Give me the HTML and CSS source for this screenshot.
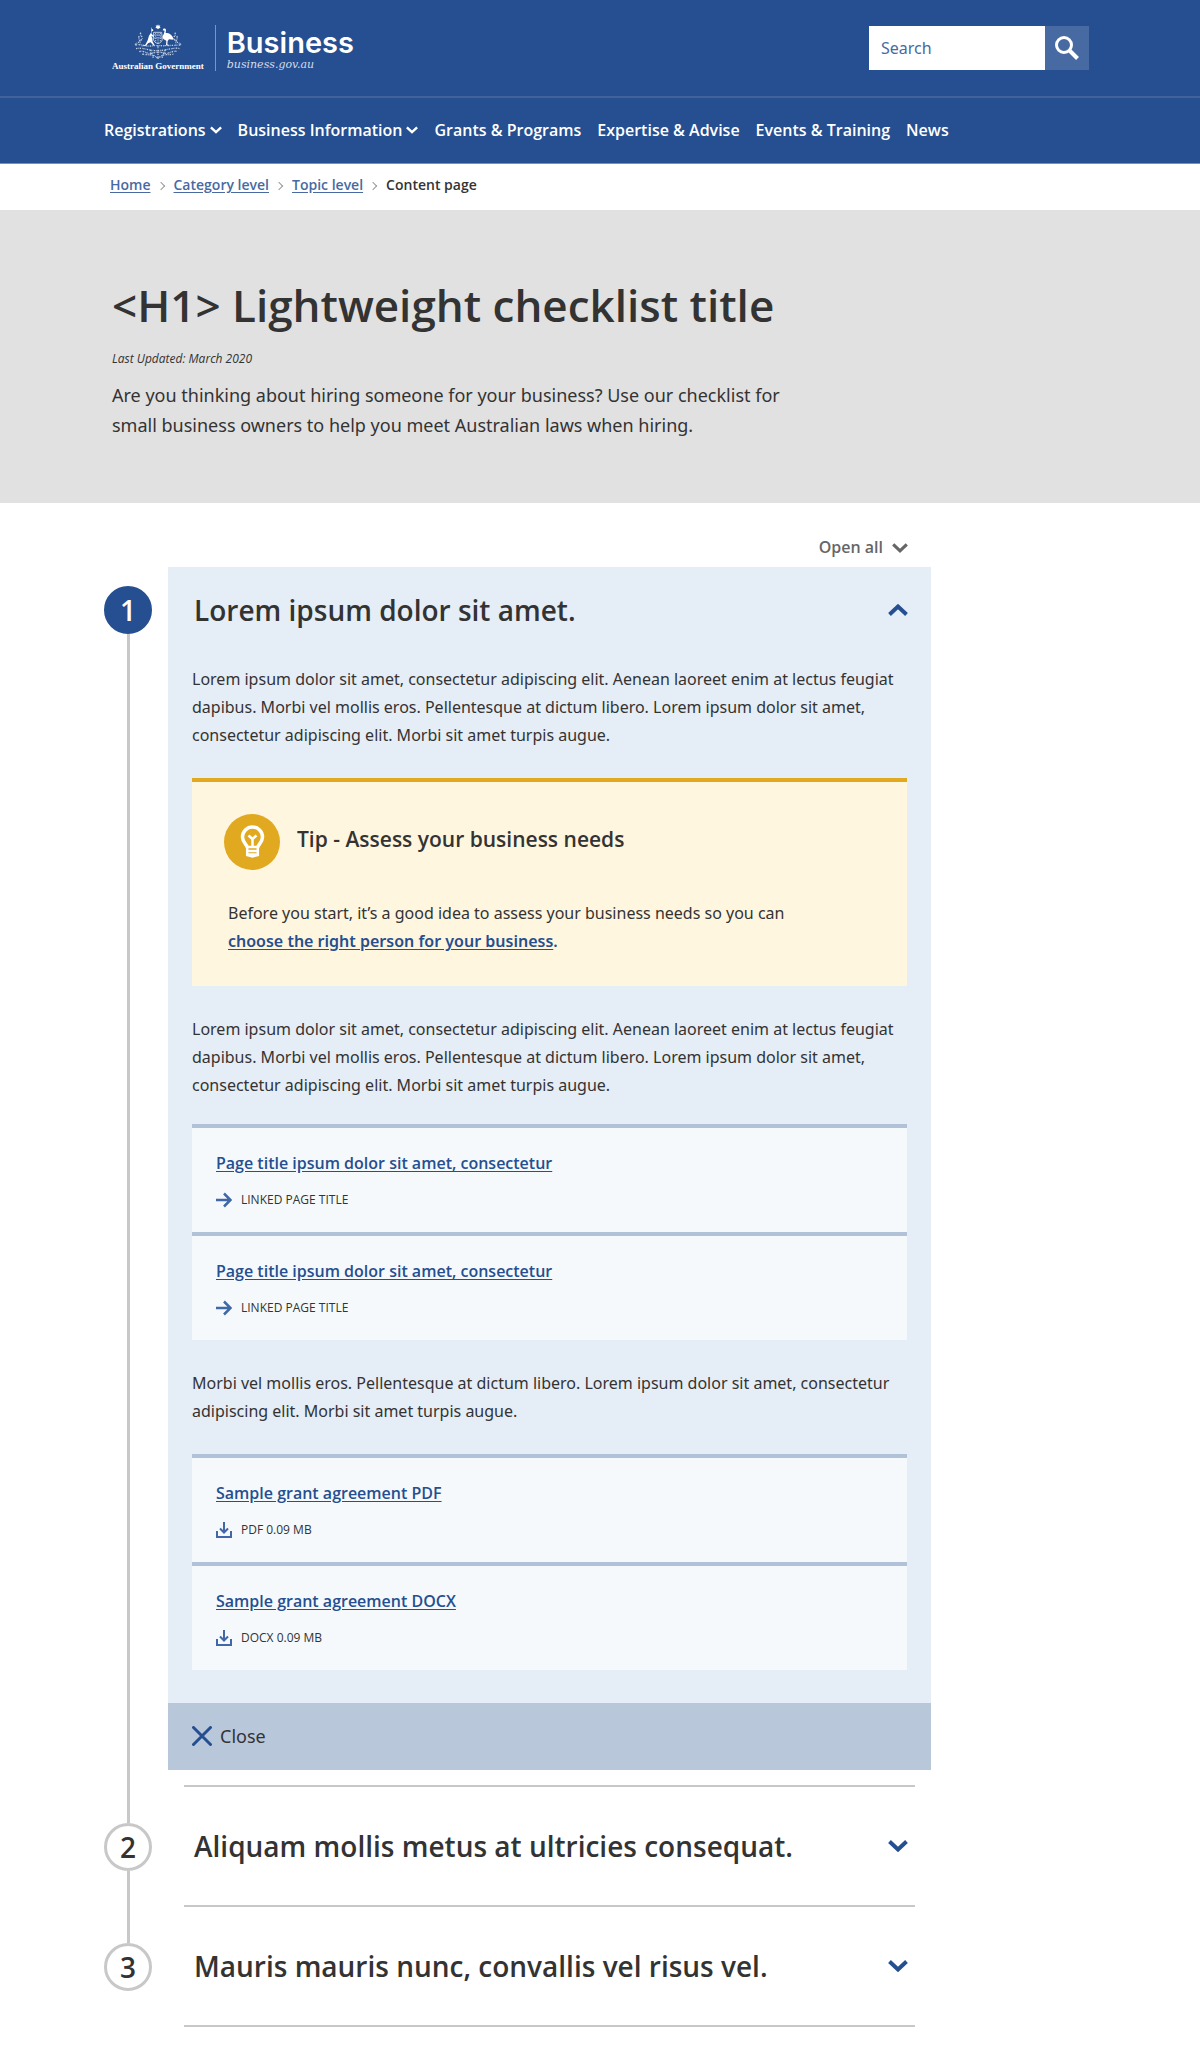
FILE: index.html
```
<!DOCTYPE html>
<html lang="en">
<head>
<meta charset="utf-8">
<meta name="viewport" content="width=device-width, initial-scale=1">
<title>Lightweight checklist title | business.gov.au</title>
<link rel="stylesheet" href="styles.css">
</head>
<body>
<svg class="sprite" aria-hidden="true">
  <symbol id="chevron" viewBox="0 0 20 12"><path d="M1.500 1.500 10 9.500l8.500-8" fill="none" stroke="currentColor" stroke-width="4"/></symbol>
  <symbol id="arrow" viewBox="0 0 16 16"><path d="M0 8h14M8 1.500 14.500 8 8 14.500" fill="none" stroke="currentColor" stroke-width="2.500"/></symbol>
  <symbol id="download" viewBox="0 0 16 16"><path d="M1 9v6h14V9M8 0v10M4 6.500l4 4 4-4" fill="none" stroke="currentColor" stroke-width="2"/></symbol>
</svg>

<header class="header">
  <div class="container masthead">
    <a class="brand" href="#">
      <span class="crest">
        <svg class="arms" viewBox="132 74 144 106" fill="#fff" aria-hidden="true">
          <path d="m204 74 2 4 5-1-2 4 3 4-5 1-3 3-3-3-5-1 3-4-2-4 5 1z"/>
          <path d="M184 82l2 5 4 4-1 3-4 1-1 6 2 3 6 6-2 2-6-4 3 8 1 10 6 11-3 1-9-10-8 3-6 8-15 1 13-5 7-13 4-14 6-9 1-8z"/>
          <path d="M220 87c4-2 8 0 8 4l-1 9c6-1 17 2 22 14l2 6-14-1-4 5-1 10 5 4-9-1 1-14-8-4c-5-4-4-11 0-15l3-11-6-1z"/>
          <path d="M191 98h24l2 20c-1 9-7 12-13 14-7-2-13-6-14-14z" fill="none" stroke="#fff" stroke-width="2"/>
          <path d="M192 106h22M191 115h25M204 98v33M197 100v26M211 100v26" stroke="#b9c8df" stroke-width="3" stroke-dasharray="4 3"/>
          <g fill="none" stroke="#c3d0e4" stroke-width="4" stroke-dasharray="4 3 2 2">
            <path d="M153 99c-8 8 9 11 2 20s-14 11-21 16"/>
            <path d="M148 110c-7 7 7 13 2 21"/>
            <path d="M254 99c9 8-8 11-1 20s14 11 21 16"/>
            <path d="M260 110c7 7-7 13-2 21"/>
            <path d="M136 136c22-4 30 6 48 3s25 0 40-1 30 0 50-3"/>
            <path d="M138 147c24-5 36 7 66 6s46-11 66-6"/>
            <path d="M148 156c14-6 22 10 40 4 10-3 26-3 34 0 16 5 26-10 40-4"/>
            <path d="M157 163c14 4 20 0 36 5l11 8 11-8c14-6 24-1 36-5"/>
            <path d="M180 150l10 24M226 150l-10 24M204 140v38"/>
          </g>
        </svg>
        <span class="crest-name">Australian Government</span>
      </span>
      <span class="wordmark">
        <span class="wordmark-name">Business</span>
        <span class="wordmark-url">business.gov.au</span>
      </span>
    </a>
    <form class="search" role="search">
      <input class="search-input" type="search" placeholder="Search" aria-label="Search">
      <button class="search-button" type="submit" aria-label="Search">
        <svg class="icon-search" viewBox="0 0 24 24" fill="none" stroke="#fff" aria-hidden="true"><circle cx="9" cy="9" r="7.500" stroke-width="3"/><path d="m14 14 8.500 8.500" stroke-width="4"/></svg>
      </button>
    </form>
  </div>
  <nav class="nav" aria-label="Main">
    <ul class="container nav-list">
      <li><a class="nav-link" href="#">Registrations <svg class="nav-chevron" aria-hidden="true"><use href="#chevron"/></svg></a></li>
      <li><a class="nav-link" href="#">Business Information <svg class="nav-chevron" aria-hidden="true"><use href="#chevron"/></svg></a></li>
      <li><a class="nav-link" href="#">Grants &amp; Programs</a></li>
      <li><a class="nav-link" href="#">Expertise &amp; Advise</a></li>
      <li><a class="nav-link" href="#">Events &amp; Training</a></li>
      <li><a class="nav-link" href="#">News</a></li>
    </ul>
  </nav>
</header>

<nav aria-label="Breadcrumb">
  <ol class="container breadcrumb">
    <li class="crumb"><a class="crumb-link" href="#">Home</a></li>
    <li class="crumb"><a class="crumb-link" href="#">Category level</a></li>
    <li class="crumb"><a class="crumb-link" href="#">Topic level</a></li>
    <li class="crumb" aria-current="page">Content page</li>
  </ol>
</nav>

<main>
  <section class="hero">
    <div class="container hero-inner">
      <h1 class="hero-title">&lt;H1&gt; Lightweight checklist title</h1>
      <p class="hero-date">Last Updated: March 2020</p>
      <p class="hero-lead">Are you thinking about hiring someone for your business? Use our checklist for small business owners to help you meet Australian laws when hiring.</p>
    </div>
  </section>

  <div class="container">
    <div class="checklist">
      <button class="open-all" type="button">Open all <svg class="open-chevron" aria-hidden="true"><use href="#chevron"/></svg></button>
      <ol class="steps">
        <li class="step step-open">
          <div class="marker"><span class="number number-current">1</span></div>
          <div class="panel">
            <h2 class="step-heading">
              <button class="step-toggle" type="button" aria-expanded="true">Lorem ipsum dolor sit amet. <svg class="step-chevron flipped" aria-hidden="true"><use href="#chevron"/></svg></button>
            </h2>
            <div class="panel-body">
              <p class="text">Lorem ipsum dolor sit amet, consectetur adipiscing elit. Aenean laoreet enim at lectus feugiat dapibus. Morbi vel mollis eros. Pellentesque at dictum libero. Lorem ipsum dolor sit amet, consectetur adipiscing elit. Morbi sit amet turpis augue.</p>
              <section class="tip">
                <div class="tip-head">
                  <svg class="tip-icon" viewBox="0 0 56 56" fill="none" stroke="#fff" aria-hidden="true">
                    <circle cx="28" cy="28" r="28" fill="#e1a920" stroke="none"/>
                    <path d="M23.500 34c0-3-5-5-5-11a10 10 0 0 1 20 0c0 6-5 8-5 11" stroke-width="3.500"/>
                    <path d="m24.500 21.500 4 3.500 4-3.500M28.500 25v8" stroke-width="2.500"/>
                    <path d="M22 33h13M22.500 37h12M23 40.500h11" stroke-width="2.500"/>
                    <path d="M23.200 33v8l5.300 1.500 5.300-1.500v-8" stroke-width="2.500"/>
                  </svg>
                  <h3 class="tip-title">Tip - Assess your business needs</h3>
                </div>
                <p class="tip-text">Before you start, it’s a good idea to assess your business needs so you can <a class="link" href="#">choose the right person for your business</a><span class="link-stop">.</span></p>
              </section>
              <p class="text">Lorem ipsum dolor sit amet, consectetur adipiscing elit. Aenean laoreet enim at lectus feugiat dapibus. Morbi vel mollis eros. Pellentesque at dictum libero. Lorem ipsum dolor sit amet, consectetur adipiscing elit. Morbi sit amet turpis augue.</p>
              <ul class="cards">
                <li class="card"><a class="link" href="#">Page title ipsum dolor sit amet, consectetur</a>
                  <span class="meta"><svg class="meta-icon" aria-hidden="true"><use href="#arrow"/></svg>LINKED PAGE TITLE</span></li>
                <li class="card"><a class="link" href="#">Page title ipsum dolor sit amet, consectetur</a>
                  <span class="meta"><svg class="meta-icon" aria-hidden="true"><use href="#arrow"/></svg>LINKED PAGE TITLE</span></li>
              </ul>
              <p class="text">Morbi vel mollis eros. Pellentesque at dictum libero. Lorem ipsum dolor sit amet, consectetur adipiscing elit. Morbi sit amet turpis augue.</p>
              <ul class="cards">
                <li class="card"><a class="link" href="#">Sample grant agreement PDF</a>
                  <span class="meta"><svg class="meta-icon" aria-hidden="true"><use href="#download"/></svg>PDF 0.09 MB</span></li>
                <li class="card"><a class="link" href="#">Sample grant agreement DOCX</a>
                  <span class="meta"><svg class="meta-icon" aria-hidden="true"><use href="#download"/></svg>DOCX 0.09 MB</span></li>
              </ul>
            </div>
            <button class="close" type="button"><svg class="close-icon" viewBox="0 0 20 20" fill="none" stroke="#254f90" stroke-width="3" stroke-linecap="round" aria-hidden="true"><path d="m1.500 1.500 17 17M18.500 1.500l-17 17"/></svg>Close</button>
          </div>
        </li>
        <li class="step step-closed">
          <div class="marker"><span class="number">2</span></div>
          <h2 class="step-heading">
            <button class="step-toggle" type="button" aria-expanded="false">Aliquam mollis metus at ultricies consequat. <svg class="step-chevron" aria-hidden="true"><use href="#chevron"/></svg></button>
          </h2>
        </li>
        <li class="step step-closed">
          <div class="marker"><span class="number">3</span></div>
          <h2 class="step-heading">
            <button class="step-toggle" type="button" aria-expanded="false">Mauris mauris nunc, convallis vel risus vel. <svg class="step-chevron" aria-hidden="true"><use href="#chevron"/></svg></button>
          </h2>
        </li>
      </ol>
    </div>
  </div>
</main>
</body>
</html>
```
FILE: styles.css
```
:root {
  --blue: #254f90;
  --blue-mid: #476aa2;
  --ink: #333;
  --grey-line: #c8c8c8;
  --font-copy: "Noto Sans", "Open Sans", sans-serif;
}

* { box-sizing: border-box; }

body {
  margin: 0;
  background: #fff;
  color: var(--ink);
  font-family: "Open Sans", "Noto Sans", sans-serif;
  font-size: 16px;
  line-height: 28px;
}

h1, h2, h3, p, ul, ol { margin: 0; padding: 0; }
h1, h2, h3 { font-weight: 600; }
ul, ol { list-style: none; }
svg { display: block; flex: none; }

button {
  border: 0;
  padding: 0;
  background: none;
  color: inherit;
  font: inherit;
  cursor: pointer;
}

.sprite { display: none; }

.container {
  max-width: 992px;
  margin: 0 auto;
}

/* Header */
.header {
  background: var(--blue);
  color: #fff;
  border-bottom: 1px solid #7392c3;
}

.masthead {
  display: flex;
  justify-content: space-between;
  align-items: center;
  min-height: 96px;
  padding: 0 7px 0 8px;
}

.brand {
  display: flex;
  align-items: center;
  color: inherit;
  text-decoration: none;
}

.crest {
  display: flex;
  flex-direction: column;
  align-items: center;
  padding-right: 11px;
}

.arms { width: 48px; height: 36px; }

.crest-name {
  font: bold 9px/12px "Liberation Serif", serif;
}

.wordmark {
  display: flex;
  flex-direction: column;
  padding: 2px 0 0 11px;
  border-left: 1px solid #7c95bc;
}

.wordmark-name {
  font: 600 29px/32px Inter, sans-serif;
}

.wordmark-url {
  color: #d3dcea;
  font: italic 11px/12px "DejaVu Serif", serif;
}

.search { display: flex; }

.search-input {
  width: 176px;
  height: 44px;
  border: 0;
  border-radius: 0;
  padding: 0 12px;
  background: #fff;
  color: var(--blue-mid);
  font: inherit;
  font-family: var(--font-copy);
  appearance: none;
}

.search-input::placeholder { color: var(--blue-mid); opacity: 1; }

.search-button {
  display: grid;
  place-items: center;
  width: 44px;
  height: 44px;
  background: var(--blue-mid);
}

.icon-search { width: 24px; height: 24px; }

.nav { border-top: 2px solid #416399; }

.nav-list {
  display: flex;
  flex-wrap: wrap;
  gap: 0 16px;
  padding: 18px 0 19px;
}

.nav-link {
  display: flex;
  align-items: center;
  gap: 4px;
  color: #fff;
  font-weight: 600;
  text-decoration: none;
}

.nav-chevron { width: 12px; height: 8px; }

/* Breadcrumb */
.breadcrumb {
  display: flex;
  flex-wrap: wrap;
  padding: 7px 6px 11px;
  font-size: 14px;
}

.crumb { display: flex; align-items: center; font-weight: 600; }

.crumb + .crumb::before {
  width: 5px;
  height: 5px;
  margin: 2px 10px 0 7px;
  border: solid #999;
  border-width: 1px 1px 0 0;
  content: "";
  rotate: 45deg;
}

.crumb-link {
  color: var(--blue-mid);
  text-underline-offset: 2px;
}

/* Hero */
.hero { background: #e1e1e1; }

.hero-inner { padding: 64px 8px 63px; }

.hero-title {
  font-size: 44px;
  line-height: 62px;
}

.hero-date {
  margin: 11px 0 10px;
  font-size: 12px;
  font-style: italic;
  line-height: 23px;
}

.hero-lead {
  max-width: 700px;
  font-family: var(--font-copy);
  font-size: 18px;
  line-height: 30px;
}

/* Checklist */
.checklist {
  display: flex;
  flex-direction: column;
  max-width: 827px;
  padding: 30px 0 33px;
}

.open-all {
  display: flex;
  align-items: center;
  align-self: flex-end;
  gap: 9px;
  margin: 0 23px 6px 0;
  color: #666;
  font-weight: 600;
}

.open-chevron { width: 16px; height: 10px; margin-top: 2px; }

.step {
  display: grid;
  grid-template-columns: 48px 1fr;
  gap: 16px;
}

.marker {
  display: flex;
  flex-direction: column;
  align-items: center;
}

.marker::before, .marker::after {
  width: 3px;
  background: var(--grey-line);
  content: "";
}

.marker::before { height: 38px; }
.marker::after { flex: 1; }
.step-open .marker::before { height: 19px; background: none; }
.step:last-child .marker::after { background: none; }

.number {
  display: grid;
  place-items: center;
  width: 48px;
  height: 48px;
  border: 3px solid var(--grey-line);
  border-radius: 50%;
  background: #fff;
  font-size: 28px;
  font-weight: 600;
  line-height: 40px;
}

.number-current {
  border-color: var(--blue);
  background: var(--blue);
  color: #fff;
}

.panel {
  display: flex;
  flex-direction: column;
  margin-bottom: 15px;
  background: #e5edf6;
}

.step-toggle {
  display: flex;
  align-items: center;
  justify-content: space-between;
  gap: 16px;
  width: 100%;
  padding: 23px 23px 23px 26px;
  font-size: 28px;
  line-height: 40px;
  text-align: left;
}

.step-chevron { width: 20px; height: 12px; color: var(--blue); }
.flipped { rotate: 180deg; }

.step-closed .step-heading {
  margin: 0 16px;
  border-top: 2px solid var(--grey-line);
}

.step-closed:last-child .step-heading { border-bottom: 2px solid var(--grey-line); }

.step-closed .step-toggle { padding: 39px 7px 39px 10px; }

.panel-body { padding: 12px 24px 33px; }

.text { margin-bottom: 29px; font-family: var(--font-copy); }
.tip + .text { margin-bottom: 25px; }

.tip {
  margin-bottom: 29px;
  padding: 32px 32px 31px;
  border-top: 4px solid #e1a920;
  background: #fff6df;
}

.tip-head { display: flex; align-items: center; gap: 17px; }
.tip-icon { width: 56px; height: 56px; }
.tip-title { padding-bottom: 6px; font-size: 21px; line-height: 30px; }

.tip-text {
  max-width: 590px;
  margin-top: 29px;
  padding-left: 4px;
  font-family: var(--font-copy);
}

.link {
  color: var(--blue);
  font-weight: 600;
  text-underline-offset: 2px;
}

.link-stop { color: var(--blue); font-weight: 600; }

.cards { margin-bottom: 29px; }
.cards:last-child { margin-bottom: 0; }

.card {
  padding: 21px 24px 20px;
  border-top: 4px solid #b1c1d8;
  background: #f5f9fc;
}

.meta {
  display: flex;
  align-items: center;
  gap: 9px;
  margin-top: 11px;
  font-size: 12px;
  line-height: 24px;
}

.meta-icon { width: 16px; height: 16px; color: #4068a8; }

.close {
  display: flex;
  align-items: center;
  gap: 8px;
  padding: 18px 24px 19px;
  background: #b9c7db;
  font-family: var(--font-copy);
  font-size: 18px;
  line-height: 30px;
}

.close-icon { width: 20px; height: 20px; }
```
